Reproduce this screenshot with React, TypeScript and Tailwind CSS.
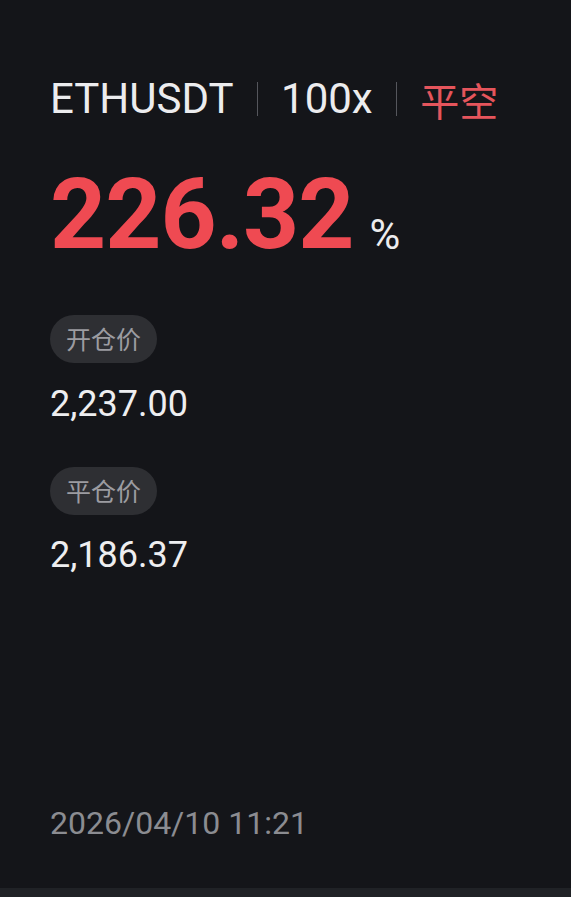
import React from "react";

export default function App() {
  const font = { fontFamily: 'Roboto, "Noto Sans CJK SC", sans-serif' };
  const cjk = { fontFamily: '"Noto Sans CJK SC", sans-serif' };
  return (
    <div className="w-[571px] h-[897px] bg-[#141519] flex flex-col overflow-hidden" style={font}>
      <div className="flex-1 flex flex-col pl-[50px]">
        <div className="mt-[77px] flex items-center h-[44px] text-[42px] leading-none text-[#ececee]">
          <span>ETHUSDT</span>
          <span className="mx-[23px] w-[1.5px] h-[34px] bg-[#55565c]" />
          <span>100x</span>
          <span className="mx-[23px] w-[1.5px] h-[34px] bg-[#55565c]" />
          <span className="text-[#e5555c] text-[39px]" style={cjk}>平空</span>
        </div>
        <div className="mt-[53px] flex items-end h-[90px]">
          <span className="text-[98px] font-bold leading-none text-[#ef4a52] tracking-[-1px]">226.32</span>
          <span className="ml-[16px] mb-[8px] text-[42px] leading-none text-[#ececee]">%</span>
        </div>
        <div className="mt-[51px] self-start h-[48px] px-[16px] rounded-full bg-[#2e2f33] flex items-center text-[25px] text-[#9c9ca1]" style={cjk}>开仓价</div>
        <div className="mt-[23px] text-[36px] leading-none text-[#eeeef0]">2,237.00</div>
        <div className="mt-[45px] self-start h-[48px] px-[16px] rounded-full bg-[#2e2f33] flex items-center text-[25px] text-[#9c9ca1]" style={cjk}>平仓价</div>
        <div className="mt-[22px] text-[36px] leading-none text-[#eeeef0]">2,186.37</div>
        <div className="mt-auto mb-[49px] text-[32px] leading-none text-[#8b8c91]">2026/04/10 11:21</div>
      </div>
      <div className="h-[9px] bg-[#202226]" />
    </div>
  );
}
